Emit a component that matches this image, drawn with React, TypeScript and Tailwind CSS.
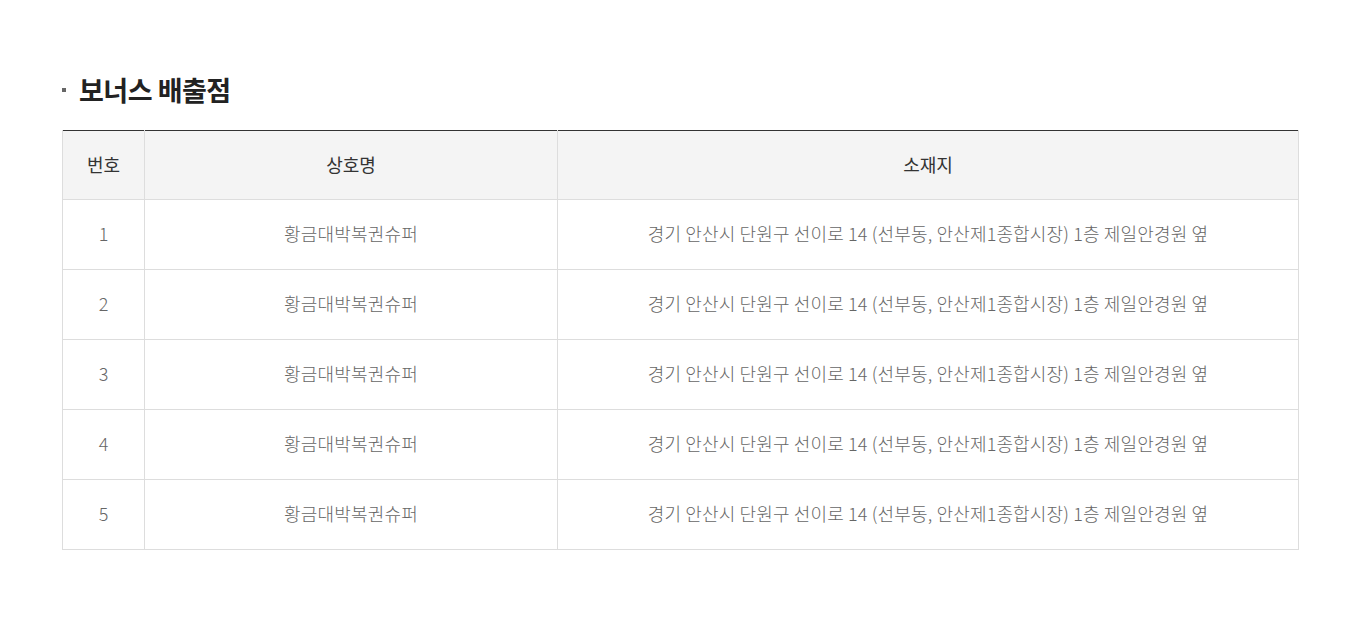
const rows = [1, 2, 3, 4, 5].map((n) => ({
  no: n,
  name: "황금대박복권슈퍼",
  addr: "경기 안산시 단원구 선이로 14 (선부동, 안산제1종합시장) 1층 제일안경원 옆",
}));

export default function App() {
  return (
    <main
      className="min-h-screen bg-white pl-[62px] pt-[71px]"
      style={{ fontFamily: '"Noto Sans CJK KR", "Noto Sans", sans-serif' }}
    >
      <h2 className="flex items-center text-[27px] font-bold leading-[38px] tracking-[-0.5px] text-[#222]">
        <span className="mr-[13px] inline-block h-[4px] w-[4px] bg-[#666]" />
        보너스 배출점
      </h2>

      <table className="mt-[21px] w-[1237px] table-fixed border-collapse border-t border-t-[#333] text-center">
        <colgroup>
          <col className="w-[82px]" />
          <col className="w-[413px]" />
          <col />
        </colgroup>
        <thead>
          <tr className="h-[69px] bg-[#f4f4f4] text-[18px] text-[#333]">
            <th className="border-x border-b border-[#ddd] pb-[2px] font-normal">번호</th>
            <th className="border-x border-b border-[#ddd] pb-[2px] font-normal">상호명</th>
            <th className="border-x border-b border-[#ddd] pb-[2px] font-normal">소재지</th>
          </tr>
        </thead>
        <tbody className="text-[18px] font-light text-[#666]">
          {rows.map((r) => (
            <tr key={r.no} className="h-[70px]">
              <td className="border border-[#ddd] pb-[2px]">{r.no}</td>
              <td className="border border-[#ddd] pb-[2px] tracking-[0.2px]">{r.name}</td>
              <td className="border border-[#ddd] pb-[2px] tracking-[0.15px]">{r.addr}</td>
            </tr>
          ))}
        </tbody>
      </table>
    </main>
  );
}
